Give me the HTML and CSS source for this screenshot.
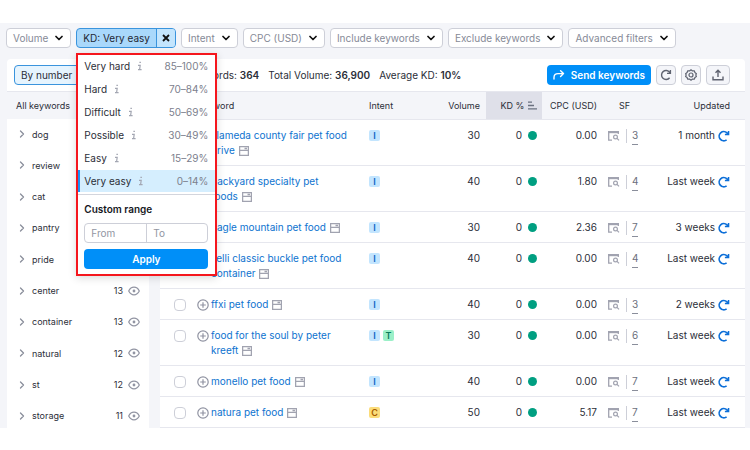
FILE: index.html
```html
<!DOCTYPE html>
<html lang="en">

<head>
    <meta charset="UTF-8" />
    <meta name="viewport" content="width=device-width, initial-scale=1.0" />
    <title>Keyword Magic</title>
    <link rel="stylesheet" href="styles.css">
</head>

<body>
    <svg class="sprite" aria-hidden="true">
        <symbol id="chevron" viewBox="0 0 8 8"><path d="M1 2.5l3 3 3-3" fill="none" stroke="#111" stroke-width="1.7" stroke-linecap="round" stroke-linejoin="round" /></symbol>
        <symbol id="arrow" viewBox="0 0 6 8"><path d="M1.5 1l3 3-3 3" fill="none" stroke="#8a8e9b" stroke-width="1.3" stroke-linecap="round" stroke-linejoin="round" /></symbol>
        <symbol id="close" viewBox="0 0 8 8"><path d="M1 1l6 6M7 1L1 7" stroke="#111" stroke-width="1.8" /></symbol>
        <symbol id="info" viewBox="0 0 6 10"><path d="M2.4 1.3h1.5M1 4.3h2.2L2.6 8.5M1 8.6h3.6" fill="none" stroke="#a3a6b2" stroke-width="1.2" /></symbol>
        <symbol id="eye" viewBox="0 0 12 10"><path d="M.7 5C2 2.3 3.8 1.2 6 1.2S10 2.3 11.3 5C10 7.7 8.2 8.8 6 8.8S2 7.7.7 5z" fill="none" stroke="#9295a3" stroke-width="1.2" /><circle cx="6" cy="5" r="1.4" fill="#9295a3" /></symbol>
        <symbol id="plus" viewBox="0 0 12 12"><circle cx="6" cy="6" r="5.2" fill="none" stroke="#8f92a1" stroke-width="1.2" /><path d="M6 3.2v5.6M3.2 6h5.6" stroke="#8f92a1" stroke-width="1.2" /></symbol>
        <symbol id="page" viewBox="0 0 10 10"><path d="M.6.6h8.800v8.800H.6zM.6 4.300h8.800M5.500 2.500h2.500" fill="none" stroke="#a1a3b0" stroke-width="1.3" /></symbol>
        <symbol id="serp" viewBox="0 0 12 10"><path d="M0 0h11v2.2H0z" fill="#a1a3b0" /><path d="M.7 1v8.2H4M10.3 1v2" fill="none" stroke="#a1a3b0" stroke-width="1.3" /><circle cx="7.5" cy="6" r="1.9" fill="none" stroke="#a1a3b0" stroke-width="1.2" /><path d="M9 7.4l2 2" stroke="#a1a3b0" stroke-width="1.3" /></symbol>
        <symbol id="refresh" viewBox="0 0 12 12"><path d="M8.600 9.800A4.600 4.600 0 1 1 9 2.900l1.200 1.300" fill="none" stroke="currentColor" stroke-width="1.7" /><path d="M11.300.9v4.300H6.900V3.800h2.900V.9z" fill="currentColor" /></symbol>
        <symbol id="sort" viewBox="0 0 9 9"><path d="M0 1.2h4M0 4.5h6M0 7.8h9" stroke="#6b7180" stroke-width="1.3" /></symbol>
    </svg>

    <main class="app">
        <div class="filters">
            <button class="filter">Volume <svg class="chevron"><use href="#chevron" /></svg></button>
            <div class="filter-active">
                <button class="active-label">KD: Very easy</button>
                <button class="active-clear" aria-label="Clear"><svg class="chevron"><use href="#close" /></svg></button>

                <div class="menu">
                    <ul class="levels">
                        <li><span>Very hard</span><svg class="info"><use href="#info" /></svg><span class="range">85–100%</span></li>
                        <li><span>Hard</span><svg class="info"><use href="#info" /></svg><span class="range">70–84%</span></li>
                        <li><span>Difficult</span><svg class="info"><use href="#info" /></svg><span class="range">50–69%</span></li>
                        <li><span>Possible</span><svg class="info"><use href="#info" /></svg><span class="range">30–49%</span></li>
                        <li><span>Easy</span><svg class="info"><use href="#info" /></svg><span class="range">15–29%</span></li>
                        <li class="selected"><span>Very easy</span><svg class="info"><use href="#info" /></svg><span class="range">0–14%</span></li>
                    </ul>
                    <form class="custom">
                        <h2>Custom range</h2>
                        <div class="from-to">
                            <input type="text" placeholder="From" aria-label="From">
                            <input type="text" placeholder="To" aria-label="To">
                        </div>
                        <button type="button" class="apply">Apply</button>
                    </form>
                </div>
            </div>
            <button class="filter">Intent <svg class="chevron"><use href="#chevron" /></svg></button>
            <button class="filter">CPC (USD) <svg class="chevron"><use href="#chevron" /></svg></button>
            <button class="filter">Include keywords <svg class="chevron"><use href="#chevron" /></svg></button>
            <button class="filter">Exclude keywords <svg class="chevron"><use href="#chevron" /></svg></button>
            <button class="filter">Advanced filters <svg class="chevron"><use href="#chevron" /></svg></button>
        </div>

        <div class="content">
            <aside class="groups">
                <div class="groups-top"><button class="by-number">By number</button></div>
                <div class="groups-head">All keywords</div>
                <ul class="group-list">
                    <li><svg class="arrow"><use href="#arrow" /></svg><span>dog</span></li>
                    <li><svg class="arrow"><use href="#arrow" /></svg><span>review</span></li>
                    <li><svg class="arrow"><use href="#arrow" /></svg><span>cat</span></li>
                    <li><svg class="arrow"><use href="#arrow" /></svg><span>pantry</span></li>
                    <li><svg class="arrow"><use href="#arrow" /></svg><span>pride</span></li>
                    <li><svg class="arrow"><use href="#arrow" /></svg><span>center</span><span class="count">13</span><svg class="eye"><use href="#eye" /></svg></li>
                    <li><svg class="arrow"><use href="#arrow" /></svg><span>container</span><span class="count">13</span><svg class="eye"><use href="#eye" /></svg></li>
                    <li><svg class="arrow"><use href="#arrow" /></svg><span>natural</span><span class="count">12</span><svg class="eye"><use href="#eye" /></svg></li>
                    <li><svg class="arrow"><use href="#arrow" /></svg><span>st</span><span class="count">12</span><svg class="eye"><use href="#eye" /></svg></li>
                    <li><svg class="arrow"><use href="#arrow" /></svg><span>storage</span><span class="count">11</span><svg class="eye"><use href="#eye" /></svg></li>
                </ul>
            </aside>

            <section class="results">
                <div class="toolbar">
                    <span>All keywords: <b>364</b></span>
                    <span>Total Volume: <b>36,900</b></span>
                    <span>Average KD: <b>10%</b></span>
                    <div class="actions">
                        <button class="send"><svg viewBox="0 0 12 10"><path d="M1 9V7.5C1 5 2.5 3.6 5 3.6h5M7.6.8l2.9 2.8-2.9 2.8" fill="none" stroke="#fff" stroke-width="1.4" stroke-linecap="round" stroke-linejoin="round" /></svg>Send keywords</button>
                        <button class="tool" aria-label="Refresh"><svg viewBox="0 0 12 12"><path d="M9.6 8.8A4.5 4.5 0 1 1 9.7 3.4M10.4 1v3.4H7" fill="none" stroke="#5f6370" stroke-width="1.4" /></svg></button>
                        <button class="tool" aria-label="Settings"><svg viewBox="0 0 12 12"><path d="M6 .8l1.5 1.1 1.9-.1.5 1.8 1.5 1.1L10.8 6l.6 1.4-1.5 1.1-.5 1.7-1.9-.1L6 11.2l-1.5-1.1-1.9.1-.5-1.7L.6 7.4 1.2 6 .6 4.7l1.5-1.1.5-1.8 1.9.1z" fill="none" stroke="#5f6370" stroke-width="1.2" stroke-linejoin="round" /><circle cx="6" cy="6" r="2" fill="none" stroke="#5f6370" stroke-width="1.2" /></svg></button>
                        <button class="tool export" aria-label="Export"><svg viewBox="0 0 12 12"><path d="M6 8V1.5M3.5 3.8L6 1.3l2.5 2.5M1 7.5v3.2h10V7.5" fill="none" stroke="#5f6370" stroke-width="1.4" /></svg></button>
                    </div>
                </div>

                <table>
                    <colgroup>
                        <col class="c-check">
                        <col>
                        <col class="c-intent">
                        <col class="c-volume">
                        <col class="c-kd">
                        <col class="c-cpc">
                        <col class="c-sf">
                        <col class="c-updated">
                    </colgroup>
                    <thead>
                        <tr>
                            <th></th>
                            <th>Keyword</th>
                            <th class="intent">Intent</th>
                            <th class="num">Volume</th>
                            <th class="kd sorted">KD % <svg class="sort"><use href="#sort" /></svg></th>
                            <th class="num">CPC (USD)</th>
                            <th class="sf">SF</th>
                            <th class="updated">Updated</th>
                        </tr>
                    </thead>
                    <tbody>
                        <tr>
                            <td class="check"><input type="checkbox" aria-label="alameda county fair pet food drive"></td>
                            <td class="keyword"><div><svg class="plus"><use href="#plus" /></svg><a href="#">alameda county fair pet food <span>drive <svg class="page"><use href="#page" /></svg></span></a></div></td>
                            <td class="intent"><span class="badge i">I</span></td>
                            <td class="num">30</td>
                            <td class="kd">0<span class="dot"></span></td>
                            <td class="num">0.00</td>
                            <td class="sf"><div><svg class="serp"><use href="#serp" /></svg><span class="features">3</span></div></td>
                            <td class="updated"><div>1 month<svg class="refresh"><use href="#refresh" /></svg></div></td>
                        </tr>
                        <tr>
                            <td class="check"><input type="checkbox" aria-label="backyard specialty pet foods"></td>
                            <td class="keyword"><div><svg class="plus"><use href="#plus" /></svg><a href="#">backyard specialty pet <span>foods <svg class="page"><use href="#page" /></svg></span></a></div></td>
                            <td class="intent"><span class="badge i">I</span></td>
                            <td class="num">40</td>
                            <td class="kd">0<span class="dot"></span></td>
                            <td class="num">1.80</td>
                            <td class="sf"><div><svg class="serp"><use href="#serp" /></svg><span class="features">4</span></div></td>
                            <td class="updated"><div>Last week<svg class="refresh"><use href="#refresh" /></svg></div></td>
                        </tr>
                        <tr>
                            <td class="check"><input type="checkbox" aria-label="eagle mountain pet food"></td>
                            <td class="keyword"><div><svg class="plus"><use href="#plus" /></svg><a href="#">eagle mountain pet <span>food <svg class="page"><use href="#page" /></svg></span></a></div></td>
                            <td class="intent"><span class="badge i">I</span></td>
                            <td class="num">30</td>
                            <td class="kd">0<span class="dot"></span></td>
                            <td class="num">2.36</td>
                            <td class="sf"><div><svg class="serp"><use href="#serp" /></svg><span class="features">7</span></div></td>
                            <td class="updated"><div>3 weeks<svg class="refresh"><use href="#refresh" /></svg></div></td>
                        </tr>
                        <tr>
                            <td class="check"><input type="checkbox" aria-label="kelli classic buckle pet food container"></td>
                            <td class="keyword"><div><svg class="plus"><use href="#plus" /></svg><a href="#">kelli classic buckle pet food <span>container <svg class="page"><use href="#page" /></svg></span></a></div></td>
                            <td class="intent"><span class="badge i">I</span></td>
                            <td class="num">40</td>
                            <td class="kd">0<span class="dot"></span></td>
                            <td class="num">0.00</td>
                            <td class="sf"><div><svg class="serp"><use href="#serp" /></svg><span class="features">4</span></div></td>
                            <td class="updated"><div>Last week<svg class="refresh"><use href="#refresh" /></svg></div></td>
                        </tr>
                        <tr>
                            <td class="check"><input type="checkbox" aria-label="ffxi pet food"></td>
                            <td class="keyword"><div><svg class="plus"><use href="#plus" /></svg><a href="#">ffxi pet <span>food <svg class="page"><use href="#page" /></svg></span></a></div></td>
                            <td class="intent"><span class="badge i">I</span></td>
                            <td class="num">40</td>
                            <td class="kd">0<span class="dot"></span></td>
                            <td class="num">0.00</td>
                            <td class="sf"><div><svg class="serp"><use href="#serp" /></svg><span class="features">3</span></div></td>
                            <td class="updated"><div>2 weeks<svg class="refresh"><use href="#refresh" /></svg></div></td>
                        </tr>
                        <tr>
                            <td class="check"><input type="checkbox" aria-label="food for the soul by peter kreeft"></td>
                            <td class="keyword"><div><svg class="plus"><use href="#plus" /></svg><a href="#">food for the soul by peter <span>kreeft <svg class="page"><use href="#page" /></svg></span></a></div></td>
                            <td class="intent"><span class="badge i">I</span><span class="badge t">T</span></td>
                            <td class="num">30</td>
                            <td class="kd">0<span class="dot"></span></td>
                            <td class="num">0.00</td>
                            <td class="sf"><div><svg class="serp"><use href="#serp" /></svg><span class="features">6</span></div></td>
                            <td class="updated"><div>Last week<svg class="refresh"><use href="#refresh" /></svg></div></td>
                        </tr>
                        <tr>
                            <td class="check"><input type="checkbox" aria-label="monello pet food"></td>
                            <td class="keyword"><div><svg class="plus"><use href="#plus" /></svg><a href="#">monello pet <span>food <svg class="page"><use href="#page" /></svg></span></a></div></td>
                            <td class="intent"><span class="badge i">I</span></td>
                            <td class="num">40</td>
                            <td class="kd">0<span class="dot"></span></td>
                            <td class="num">0.00</td>
                            <td class="sf"><div><svg class="serp"><use href="#serp" /></svg><span class="features">7</span></div></td>
                            <td class="updated"><div>Last week<svg class="refresh"><use href="#refresh" /></svg></div></td>
                        </tr>
                        <tr>
                            <td class="check"><input type="checkbox" aria-label="natura pet food"></td>
                            <td class="keyword"><div><svg class="plus"><use href="#plus" /></svg><a href="#">natura pet <span>food <svg class="page"><use href="#page" /></svg></span></a></div></td>
                            <td class="intent"><span class="badge c">C</span></td>
                            <td class="num">50</td>
                            <td class="kd">0<span class="dot"></span></td>
                            <td class="num">5.17</td>
                            <td class="sf"><div><svg class="serp"><use href="#serp" /></svg><span class="features">7</span></div></td>
                            <td class="updated"><div>Last week<svg class="refresh"><use href="#refresh" /></svg></div></td>
                        </tr>
                    </tbody>
                </table>
            </section>
        </div>
    </main>
</body>

</html>
```
FILE: styles.css
```css
* {
    box-sizing: border-box;
}

body {
    margin: 0;
    padding: 23px 0;
    background: white;
    font-family: Inter, "Liberation Sans", sans-serif;
    font-size: 10px;
    line-height: 15px;
    color: #2b2e38;
}

button,
input {
    font: inherit;
    margin: 0;
}

button {
    cursor: pointer;
    padding: 0;
}

svg {
    display: block;
    flex: none;
}

ul {
    list-style: none;
    margin: 0;
    padding: 0;
}

.sprite {
    position: absolute;
    width: 0;
    height: 0;
}

.app {
    background: #f4f5f9;
    padding: 5px 5px 0 6px;
}

/* filters */
.filters {
    display: flex;
    gap: 5px;
}

.filter {
    display: flex;
    align-items: center;
    gap: 7px;
    height: 20px;
    padding: 0 7px 0 6px;
    background: white;
    border: 1px solid #cdcfd8;
    border-radius: 4px;
    color: #868a97;
    white-space: nowrap;
}

.chevron {
    width: 8px;
    height: 8px;
}

.filter-active {
    position: relative;
    display: flex;
    height: 20px;
    border: 1px solid #3a94dd;
    border-radius: 4px;
    background: #a9d8fb;
}

.active-label,
.active-clear {
    border: none;
    background: none;
    color: #1f2733;
    white-space: nowrap;
}

.active-label {
    padding: 0 6px;
}

.active-clear {
    padding: 0 5px;
    background: #c4e5fd;
    border-left: 1px solid #3a94dd;
    border-radius: 0 3px 3px 0;
}

/* difficulty menu */
.menu {
    position: absolute;
    top: 24px;
    left: -1px;
    z-index: 10;
    width: 141px;
    background: white;
    border: 2px solid #f5161d;
    box-shadow: 0 2px 8px rgba(0, 0, 0, 0.15);
}

.levels {
    display: grid;
    gap: 1px;
    padding-bottom: 2px;
    border-bottom: 1px solid #d3d5dd;
}

.levels li {
    display: flex;
    align-items: center;
    height: 22px;
    padding: 0 7px 0 6px;
}

.levels .selected {
    background: #d5eefe;
    box-shadow: inset 2px 0 #1a90f5;
}

.info {
    width: 6px;
    height: 10px;
    margin-left: 7px;
}

.range {
    margin-left: auto;
    color: #7c808d;
}

.custom {
    padding: 7px 7px 5px 6px;
}

.custom h2 {
    margin: 0 0 6px;
    font-size: 10px;
    font-weight: 600;
    color: #15171e;
}

.from-to {
    display: flex;
    margin-bottom: 6px;
    border: 1px solid #cdcfd8;
    border-radius: 4px;
}

.from-to input {
    width: 50%;
    height: 18px;
    padding: 0 6px;
    border: none;
    background: none;
}

.from-to input + input {
    border-left: 1px solid #cdcfd8;
}

.from-to input::placeholder {
    color: #9195a2;
}

.apply {
    width: 100%;
    height: 20px;
    border: none;
    border-radius: 4px;
    background: #008ff8;
    color: white;
    font-weight: 600;
}

/* keyword groups */
.content {
    display: flex;
    gap: 11px;
    margin-top: 11px;
    padding-left: 1px;
}

.groups {
    display: flex;
    flex-direction: column;
    flex: none;
    width: 142px;
    background: white;
    border-radius: 4px 4px 0 0;
    font-size: 9px;
}

.groups-top {
    height: 32px;
    padding: 6px 7px;
}

.by-number {
    height: 20px;
    padding: 0 8px 0 6px;
    border: 1px solid #3a94dd;
    border-radius: 4px;
    background: #e6f4fe;
    color: #2b2e38;
    font-size: 10px;
}

.groups-head {
    height: 28px;
    padding: 6px 9px;
    background: #f4f5f9;
    border-top: 1px solid #e6e7ee;
}

.group-list {
    display: flex;
    flex: 1;
    flex-direction: column;
    justify-content: space-between;
    padding: 3px 9px 0 12px;
}

.group-list li {
    display: flex;
    align-items: center;
    height: 24px;
}

.arrow {
    width: 6px;
    height: 8px;
    margin-right: 7px;
}

.count {
    margin-left: auto;
}

.eye {
    width: 12px;
    height: 10px;
    margin-left: 5px;
}

/* results */
.results {
    flex: 1;
    min-width: 0;
    background: white;
    border-radius: 4px 4px 0 0;
}

.toolbar {
    display: flex;
    align-items: center;
    gap: 9px;
    height: 32px;
    padding: 0 15px 0 14px;
    white-space: nowrap;
}

.toolbar b {
    font-weight: 600;
}

.actions {
    display: flex;
    gap: 5px;
    margin-left: auto;
}

.send {
    display: flex;
    align-items: center;
    gap: 6px;
    height: 20px;
    padding: 0 6px;
    border: none;
    border-radius: 4px;
    background: #008ff8;
    color: white;
    font-weight: 600;
}

.send svg {
    width: 12px;
    height: 10px;
}

.tool {
    display: flex;
    align-items: center;
    justify-content: center;
    width: 20px;
    height: 20px;
    border: 1px solid #cdcfd8;
    border-radius: 4px;
    background: #f4f5f9;
}

.tool svg {
    width: 12px;
    height: 12px;
}

.export {
    width: 24px;
}

table {
    width: 100%;
    table-layout: fixed;
    border-collapse: separate;
    border-spacing: 0;
}

.c-check {
    width: 37px;
}

.c-intent {
    width: 67px;
}

.c-volume,
.c-kd {
    width: 56px;
}

.c-cpc {
    width: 61px;
}

.c-sf {
    width: 50px;
}

.c-updated {
    width: 92px;
}

th {
    height: 29px;
    padding: 0;
    background: #f4f5f9;
    border-top: 1px solid #e6e7ee;
    border-bottom: 1px solid #e6e7ee;
    font-size: 9px;
    font-weight: 400;
    text-align: left;
    white-space: nowrap;
}

td {
    padding: 8px 0 7px;
    border-bottom: 1px solid #e6e7ee;
    vertical-align: top;
}

.intent {
    padding-left: 6px;
}

.num {
    padding-right: 6px;
    text-align: right;
}

th.sorted {
    background: #dfe0e9;
}

.kd {
    padding-right: 5px;
    text-align: right;
}

.sort {
    display: inline-block;
    width: 9px;
    height: 9px;
    margin-left: 1px;
    vertical-align: -1px;
}

th.sf {
    padding-left: 16px;
}

.updated {
    padding-right: 15px;
    text-align: right;
}

.check input {
    display: block;
    appearance: none;
    width: 12px;
    height: 12px;
    margin: 2px 0 0 14px;
    border: 1px solid #cdcfd8;
    border-radius: 4px;
    background: white;
}

.check input:checked {
    background: #008ff8;
}

.keyword div {
    display: flex;
    gap: 2px;
    padding-right: 10px;
}

.keyword span {
    white-space: nowrap;
}

.plus {
    width: 12px;
    height: 12px;
    margin-top: 2px;
}

a {
    color: #0d73cf;
    text-decoration: none;
}

.page {
    display: inline-block;
    width: 10px;
    height: 10px;
    margin-left: 1px;
    vertical-align: -2px;
}

.badge {
    display: inline-block;
    width: 11px;
    margin-right: 3px;
    border-radius: 2px;
    font-size: 9px;
    font-weight: 600;
    line-height: 11px;
    text-align: center;
}

.badge.i {
    background: #c3e5fe;
    color: #0a66c4;
}

.badge.t {
    background: #9bf0c8;
    color: #0a7a5b;
}

.badge.c {
    background: #fbdc7a;
    color: #a75d00;
}

.dot {
    display: inline-block;
    width: 9px;
    height: 9px;
    margin-left: 6px;
    border-radius: 50%;
    background: #009f81;
    vertical-align: -1px;
}

.sf div,
.updated div {
    display: flex;
    align-items: center;
    height: 15px;
}

.serp {
    box-sizing: content-box;
    width: 12px;
    height: 10px;
    margin: 0 5px;
    padding: 2px 6px 2px 0;
    border-right: 1px solid #cdcfd8;
}

.features {
    align-self: flex-start;
    height: 17px;
    border-bottom: 1px dashed #8a8e9b;
    color: #6b6f7c;
}

.updated div {
    justify-content: flex-end;
    gap: 3px;
}

.refresh {
    width: 12px;
    height: 12px;
    color: #0d6fd8;
}
```
